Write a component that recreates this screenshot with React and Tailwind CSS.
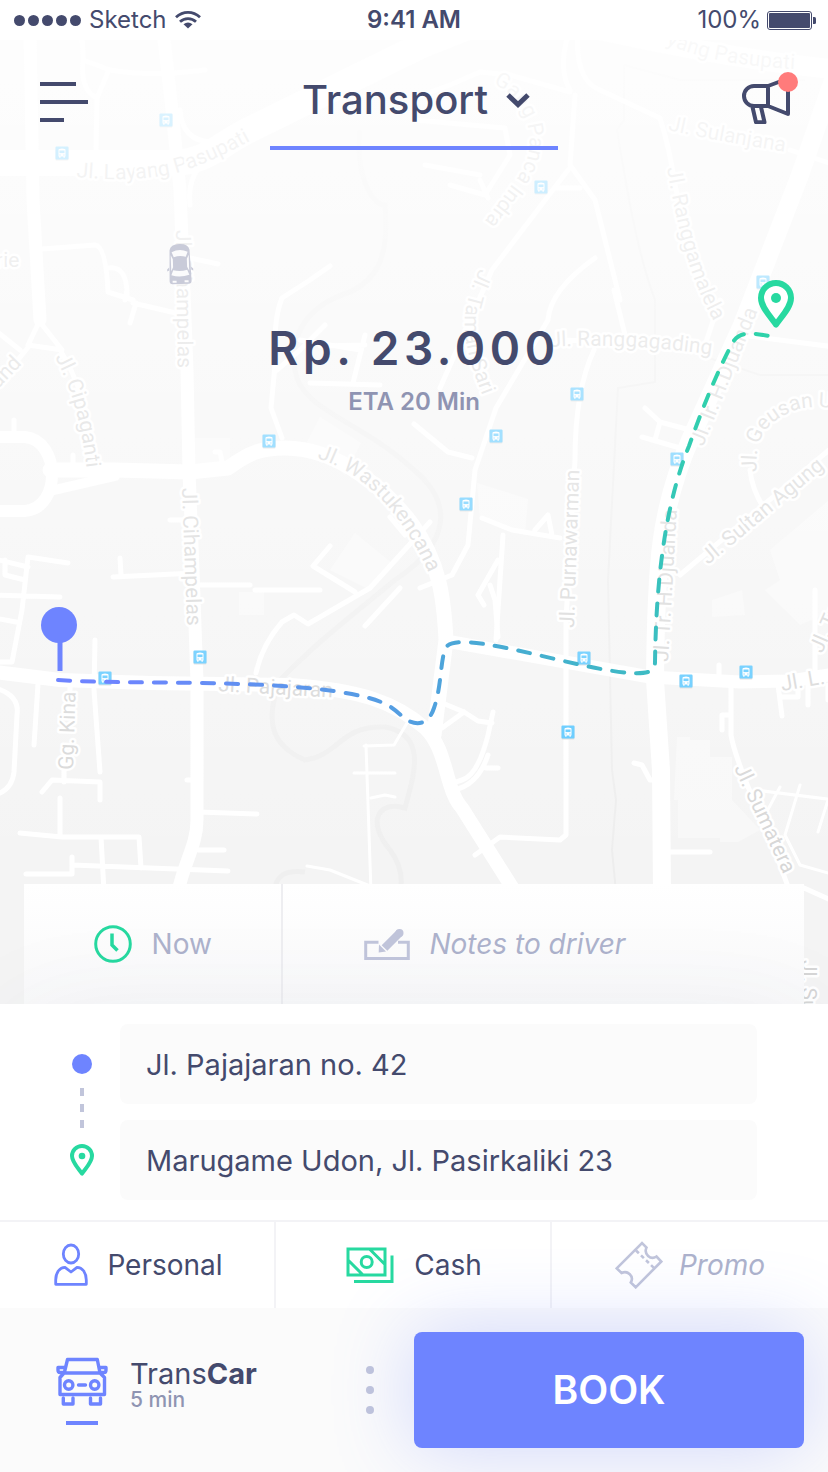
import React from "react";

const mainRoads = [
  ["M30 30L33 200L40 320", 13],
  ["M-5 163H165C205 164 215 148 245 132L420 46L470 26", 26],
  ["M163 30L172 110L180 190L187 370L189 472L193 570L197 682V820C197 845 184 862 178 892", 13],
  ["M-5 437H25C60 440 62 508 25 511H-5", 12],
  ["M50 470H115L190 472L228 468C250 452 262 448 285 448C340 448 388 492 412 524C440 562 444 600 446 640L434 735", 15],
  ["M50 491L115 476", 10],
  ["M-5 672L60 680L150 683L290 685C360 690 395 702 425 728C448 750 445 790 462 808L515 892", 14],
  ["M446 641L650 677L740 682L790 681L835 674", 13],
  ["M840 60L800 175L742 325L690 440C660 510 656 560 655 680L661 770L662 892", 18],
  ["M600 30C690 50 760 62 840 70", 20],
];

const smallRoads = [
  "M82 30L83 60L110 70Q150 77 205 70M83 60Q80 90 97 98L108 72M97 98L96 150",
  "M40 320L28 345L62 350L40 322M-5 330L20 350M-5 388L30 345M60 350Q86 390 98 470",
  "M180 110Q182 140 210 142M190 205Q186 170 215 155",
  "M42 249L95 245Q106 246 108 292L133 300M108 268Q128 265 127 298M125 300L127 290M133 303L180 314M136 303L130 323",
  "M190 258L218 264M330 266L310 280L282 298Q273 320 275 365L271 408L282 438M277 370L300 350L325 325M320 346L365 345M365 335L353 383M310 383L380 385M300 340L360 350",
  "M14 420V438M73 455V470M215 452H220L222 462M170 520H190M113 577L195 573M120 558L121 575M200 585H250",
  "M-5 559L28 567M28 557L68 563M28 557L22 610L12 662H-5M-5 595L60 597M-5 618L16 622M5 560V575L25 580",
  "M95 640L94 690L100 772M38 684L34 745M70 684V700M-5 688Q20 695 17 715L14 772Q12 790 -5 795M64 760V782M42 792L52 780L100 782V800M60 798V835M20 833L62 837H139L141 868M26 874H72V857M72 865L228 871M101 837L104 892M198 812L257 814M198 850H224M188 690M187 780H196",
  "M256 673Q262 645 282 622L294 615L308 624L370 588L430 522M330 546L313 566L355 592M365 626L400 588M390 517L405 535M255 590L320 590",
  "M568 35Q558 70 570 90M578 30Q574 80 600 90L660 118Q670 150 675 185L690 250M575 95L570 165L595 200L620 300M568 170L492 270L440 388M556 188L580 188M425 165L480 175M415 120L505 128L510 155L485 195L450 185M480 180L488 198M414 98L450 85L480 72L510 75L570 92",
  "M595 258Q550 290 548 320L496 408L475 470L468 545L452 575L420 588M414 424L448 452L472 458M614 290L625 335M560 340L705 345L720 300M594 350Q575 390 575 460L566 620V835L560 840L500 837L475 855",
  "M482 518L512 530L560 538M503 535L496 640M498 560L478 595L484 605M535 530L548 515L552 535M645 408L660 422L690 430M642 437L680 448M660 422L655 440M740 335L835 347M750 470Q752 490 765 510M680 575L835 445",
  "M440 702L464 712L478 721L492 723M442 728L464 712M493 712L488 735Q478 775 462 780L450 784M488 755Q478 785 454 790M486 768H498M498 637L495 600L490 585",
  "M719 665V680M731 685V735Q735 760 770 838L790 892M722 715H731M722 715V730M778 685L782 716M782 697H798V682M808 682V705M634 763L642 765L650 780H660M662 852H710",
  "M804 888L835 902M815 590V675M828 685V700",
  "M790 150L835 165",
];
const lanes =
  "M366 745L371 892M364 746L394 745L410 718M354 773H395M371 798L385 795L395 797M307 866L330 870L375 888M755 790L835 800M780 787L765 815M800 785L785 835L800 865L835 875M828 800L818 832";

const rivers =
  "M360 130C355 170 370 205 385 205C390 260 375 280 350 292C310 305 290 330 295 370C300 410 360 420 414 470C450 500 455 540 395 580C340 625 320 640 280 680C265 720 270 745 305 760C340 755 340 725 385 727C430 735 412 780 405 808C380 800 365 820 390 850Q405 870 400 892M275 892Q275 868 305 872";
const borders =
  "M624 65V120L617 130C630 210 640 260 655 300V382L618 388L608 580L612 770L616 800L612 850L616 892M624 65L680 80L805 80M700 355L760 375H835";

const labels = [
  ["M76 177Q150 184 192 168T275 126", "Jl. Layang Pasupati"],
  ["M666 44Q720 68 820 70", "yang Pasupati"],
  ["M668 130Q720 142 800 154", "Jl. Sulanjana"],
  ["M493 84C516 92 550 138 514 182L484 222", "Gang Panca Indra"],
  ["M667 168C678 230 690 285 722 335", "Jl. Ranggamalela"],
  ["M176 230L178 390", "Jl. Cihampelas"],
  ["M-4 267H60", "rie"],
  ["M-2 389L48 338", "and"],
  ["M55 357C70 385 82 420 88 480", "Jl. Cipaganti"],
  ["M182 488L188 650", "Jl. Cihampelas"],
  ["M317 458C370 475 408 520 436 590", "Jl. Wastukencana"],
  ["M73 770L76 680", "Gg. Kina"],
  ["M218 691L360 699", "Jl. Pajajaran"],
  ["M574 628L580 450", "Jl. Purnawarman"],
  ["M480 268C455 320 462 345 492 420", "Jl. Taman Sari"],
  ["M550 347Q630 342 720 356", "Jl. Ranggagading"],
  ["M703 447L764 295", "Jl. Ir. H.Djuanda"],
  ["M668 662L678 490", "Jl. Tr. H.Djuanda"],
  ["M757 472C754 440 764 422 796 410Q820 402 880 416", "Jl. Geusan Ulun"],
  ["M708 565L840 455", "Jl. Sultan Agung"],
  ["M822 654L850 590", "Jl. Tr"],
  ["M782 691L840 681", "Jl. L."],
  ["M734 768L800 910", "Jl. Sumatera"],
  ["M802 960V1060", "Jl. Sum"],
];

const stops = [
  [62, 153], [166, 120], [541, 187], [763, 282], [577, 394],
  [269, 441], [496, 436], [466, 504], [677, 459], [200, 657],
  [105, 678], [584, 658], [686, 681], [746, 672], [568, 732],
];

function PinShape() {
  return (
    <>
      <path
        d="M18 44.500C12 36 3 27 3 18a15 15 0 0 1 30 0c0 9-9 18-15 26.500z"
        fill="#fff"
        stroke="#27d9a0"
        strokeWidth="6"
        strokeLinejoin="round"
      />
      <circle cx="18" cy="18" r="5" fill="#27d9a0" />
    </>
  );
}

function CityMap() {
  return (
    <svg
      className="absolute inset-0 h-full w-full"
      viewBox="0 40 828 964"
      preserveAspectRatio="xMidYMid slice"
      role="img"
      aria-label="Route map"
    >
      <defs>
        <linearGradient id="fade" gradientUnits="userSpaceOnUse" x1="0" y1="40" x2="0" y2="880">
          <stop offset="0" stopColor="#fff" stopOpacity=".86" />
          <stop offset="1" stopColor="#fff" stopOpacity="0" />
        </linearGradient>
        <linearGradient id="trip" gradientUnits="userSpaceOnUse" x1="130" y1="720" x2="740" y2="420">
          <stop offset="0" stopColor="#6e84ff" />
          <stop offset=".5" stopColor="#4aa8d6" />
          <stop offset=".8" stopColor="#38c3bc" />
          <stop offset="1" stopColor="#2fd2aa" />
        </linearGradient>
        {labels.map(([d], i) => (
          <path key={i} id={`street-${i}`} d={d} />
        ))}
      </defs>
      <rect y="40" width="828" height="964" fill="#f4f4f4" />
      <g fill="#f8f8f8">
        <path d="M320 417L361 443L345 475L307 442zM355 533L394 565L370 590L330 570zM477 483L528 499L525 535L480 520zM239 592H264V615H239zM195 438H230V470H195z" />
        <path d="M677 737H690V740H710V757H732V800L760 830L738 842H720V838H678V800H674zM835 495L770 550L780 580L765 590L800 625L835 610zM712 600L742 590L745 615L712 617z" />
      </g>
      <path d={rivers} fill="none" stroke="#efefef" strokeWidth="5" />
      <path d={borders} fill="none" stroke="#ededed" strokeWidth="2" />
      <g fill="none" stroke="#fff" strokeLinecap="round" strokeLinejoin="round">
        <path d={lanes} strokeWidth="3" />
        {smallRoads.map((d) => (
          <path key={d} d={d} strokeWidth="5" />
        ))}
        {mainRoads.map(([d, w]) => (
          <path key={d} d={d} strokeWidth={w} />
        ))}
      </g>
      <g
        fontFamily="Roboto, sans-serif"
        fontSize="21"
        fill="#d6d6d6"
        stroke="#fff"
        strokeWidth="5"
        strokeLinejoin="round"
        paintOrder="stroke"
      >
        {labels.map(([, name], i) => (
          <text key={i}>
            <textPath href={`#street-${i}`}>{name}</textPath>
          </text>
        ))}
      </g>
      {stops.map(([x, y]) => (
        <g key={`${x}-${y}`} transform={`translate(${x - 6.5} ${y - 6.5})`}>
          <rect y="1" width="13" height="13" rx="1" fill="#dcdcdc" />
          <rect width="13" height="13" rx="1" fill="#55c6ff" />
          <path d="M3 3.500Q3 2 6.500 2T10 3.500V10H9.300V11.200H8V10H5V11.200H3.700V10H3z" fill="#fff" />
          <rect x="4" y="4" width="5" height="2.600" fill="#55c6ff" />
          <path d="M4 8h1.200v1H4zM7.800 8H9v1H7.800z" fill="#55c6ff" />
        </g>
      ))}
      <rect y="40" width="828" height="964" fill="url(#fade)" />

      <g transform="translate(180 264) rotate(-2)" fill="#c9cbd9">
        <path d="M-10-14Q-9-20 0-20T10-14L11 17Q11 20 8 20H-8Q-11 20-11 17z" />
        <path d="M-11 3L-13 5V7L-11 6zM11 3L13 5V7L11 6z" />
        <path d="M-8-12Q0-16 8-12L6-7Q0-9-6-7zM-7 6Q0 8 7 6L9 11Q0 14-9 11zM-9-9L-7-5V3L-9 7zM9-9L7-5V3L9 7zM-8 16.500H-4V18.500H-8zM4 16.500H8V18.500H4z" fill="#fbfbfc" />
      </g>

      <path
        d="M58 680C110 683 150 682 200 683C270 684 330 688 365 697C390 703 396 711 404 718C415 726 428 726 434 708C442 685 440 660 446 647C452 640 470 642 484 644C530 651 590 670 630 673C650 674 655 671 655 662C656 590 663 510 689 446C706 398 722 362 733 342C740 331 752 333 769 336"
        fill="none"
        stroke="url(#trip)"
        strokeWidth="4"
        strokeLinecap="round"
        strokeDasharray="12 12"
      />
      <circle cx="59" cy="625" r="18" fill="#6e84ff" />
      <path d="M60 640V671" stroke="#6e84ff" strokeWidth="5" />
      <g transform="translate(758 280)">
        <PinShape />
      </g>
    </svg>
  );
}

function StatusBar() {
  return (
    <div className="grid h-10 grid-cols-[1fr_auto_1fr] items-center bg-white px-3.5 text-2xl">
      <div className="flex items-center gap-2">
        <div className="flex gap-[3px]" aria-hidden="true">
          <i className="size-[11px] rounded-full bg-[#444a6d]" />
          <i className="size-[11px] rounded-full bg-[#444a6d]" />
          <i className="size-[11px] rounded-full bg-[#444a6d]" />
          <i className="size-[11px] rounded-full bg-[#444a6d]" />
          <i className="size-[11px] rounded-full bg-[#444a6d]" />
        </div>
        <span>Sketch</span>
        <svg width="26" height="18" viewBox="0 0 26 18" fill="none" stroke="#444a6d" strokeWidth="2.800" aria-hidden="true">
          <path d="M1 6.300C8-.200 18-.200 25 6.300M5 10.700C9.500 6.500 16.500 6.500 21 10.700" />
          <path d="M13 17.500L8.500 13.300Q13 9.800 17.500 13.300z" fill="#444a6d" stroke="none" />
        </svg>
      </div>
      <span className="font-semibold">9:41 AM</span>
      <div className="-mr-0.5 flex items-center justify-end gap-1.5">
        <span>100%</span>
        <svg width="49" height="19" viewBox="0 0 49 19" aria-hidden="true">
          <rect x=".5" y=".5" width="44" height="18" rx="2.500" fill="none" stroke="#444a6d" />
          <rect x="2" y="2" width="41" height="15" rx="1" fill="#444a6d" />
          <path d="M46 6h1.500q1.500 0 1.500 1.500v4q0 1.500-1.500 1.500H46z" fill="#444a6d" />
        </svg>
      </div>
    </div>
  );
}

function Header() {
  return (
    <header className="grid grid-cols-[1fr_auto_1fr] items-center px-10">
      <button aria-label="Menu" className="mt-3.5 flex w-12 flex-col gap-3.5">
        <i className="h-1 w-9 bg-[#444a6d]" />
        <i className="h-1 w-12 bg-[#444a6d]" />
        <i className="h-1 w-6 bg-[#444a6d]" />
      </button>
      <button className="flex h-[110px] w-72 items-center justify-center gap-4.5 border-b-4 border-[#6e84ff] pt-3.5 pl-1 text-[40px] font-medium">
        Transport
        <svg width="24" height="16" viewBox="0 0 24 16" fill="none" stroke="#444a6d" strokeWidth="5" aria-hidden="true">
          <path d="M2 3L12 12.500L22 3" />
        </svg>
      </button>
      <button aria-label="Announcements" className="-mr-3 mt-1.5 justify-self-end">
        <svg width="58" height="52" viewBox="0 0 58 52" fill="none" stroke="#444a6d" strokeWidth="4" strokeLinejoin="round">
          <path d="M26 14H12a10 10 0 0 0 0 20H26zL46 6.500V42L26 34M10.500 35L14 50.200H22.500L19 35" />
          <circle cx="46" cy="10" r="10" fill="#ff7b7b" stroke="none" />
        </svg>
      </button>
    </header>
  );
}

function TripOptions() {
  return (
    <div className="mx-6 mt-auto flex h-30 bg-linear-to-b from-white to-[#f9f9fa] text-[28px] text-[#adb2cc]">
      <button className="flex w-[33%] items-center justify-center gap-5">
        <svg width="38" height="38" viewBox="0 0 38 38" fill="none" stroke="#27d9a0" strokeWidth="3" aria-hidden="true">
          <circle cx="19" cy="19" r="17.300" />
          <path d="M18 8.500V20L23.500 25.500" strokeWidth="3.500" />
        </svg>
        Now
      </button>
      <label className="flex min-w-0 flex-1 items-center gap-4.5 border-l-2 border-[#eeeef1] pl-20">
        <svg className="shrink-0" width="48" height="36" viewBox="0 0 48 36" aria-hidden="true">
          <path d="M15.500 16.300H2.700V32.500H45.300V16.300H35" fill="none" stroke="#c1c5db" strokeWidth="3" />
          <path d="M21.500 22L36.500 7" stroke="#c1c5db" strokeWidth="8" />
          <circle cx="36.500" cy="7" r="4" fill="#c1c5db" />
          <path d="M16 18.500L23 25.500L15.700 26.500z" fill="#c1c5db" />
        </svg>
        <input
          aria-label="Notes to driver"
          placeholder="Notes to driver"
          className="min-w-0 flex-1 bg-transparent italic outline-none placeholder:text-[#adb2cc]"
        />
      </label>
    </div>
  );
}

function Addresses() {
  return (
    <section className="flex items-center pt-5 pr-[71px] pb-5 pl-[70px]">
      <div className="flex w-[50px] flex-col pt-1.5">
        <div className="flex w-6 flex-col items-center">
          <i className="size-5 rounded-full bg-[#6e84ff]" />
          <i className="mt-3.5 h-2 w-1 bg-[#c1c5db]" />
          <i className="mt-2 h-2 w-1 bg-[#c1c5db]" />
          <i className="mt-2 h-2 w-1 bg-[#c1c5db]" />
          <svg className="mt-4" width="24" height="32" viewBox="0 0 36 48" aria-hidden="true">
            <PinShape />
          </svg>
        </div>
      </div>
      <div className="flex min-w-0 flex-1 flex-col gap-4">
        <input
          aria-label="Pickup address"
          defaultValue="Jl. Pajajaran no. 42"
          className="h-20 w-full rounded-lg bg-[#fbfbfb] px-6.5 text-[29px] outline-none"
        />
        <input
          aria-label="Destination address"
          defaultValue="Marugame Udon, Jl. Pasirkaliki 23"
          className="h-20 w-full rounded-lg bg-[#fbfbfb] px-6.5 text-[29px] outline-none"
        />
      </div>
    </section>
  );
}

function BookingOptions() {
  return (
    <section className="grid h-22 grid-cols-3 border-t-2 border-[#f3f3f6] text-[28px]">
      <button className="flex items-center justify-center gap-4.5 border-r-2 border-[#f3f3f6] pl-0.5">
        <svg width="36" height="44" viewBox="0 0 36 44" fill="none" stroke="#6e84ff" strokeWidth="2.800" strokeLinejoin="round" aria-hidden="true">
          <ellipse cx="18" cy="11" rx="7.700" ry="9" />
          <path d="M2.700 41.300V37C2.700 30 6.500 24.300 12 24.300L18 29L24 24.300C29.500 24.300 33.300 30 33.300 37V41.300z" />
        </svg>
        Personal
      </button>
      <button className="flex items-center justify-center gap-5 border-r-2 border-[#f3f3f6] pl-0.5">
        <svg width="48" height="38" viewBox="0 0 48 38" fill="none" stroke="#27d9a0" strokeWidth="3" aria-hidden="true">
          <path d="M2 3H39V29H2zM2 14L16.500 28.500M24 3.500L39 18.500M46 9.500V35.500H8" />
          <circle cx="20.700" cy="16" r="5.500" />
        </svg>
        Cash
      </button>
      <button className="flex items-center justify-center gap-4 text-[#adb2cc] italic">
        <svg width="48" height="48" viewBox="0 0 48 48" fill="none" stroke="#c1c5db" strokeWidth="2.600" aria-hidden="true">
          <path d="M1.700 27.300L27 2L31.500 6.500C28.500 13 35.500 19.500 41.500 15.500L46.300 20.500L20.700 46.300L15.800 41.500C19.500 35 12.500 29 6.500 32z" />
          <path d="M21 9.500L39.500 27.500" strokeDasharray="4 3" />
        </svg>
        Promo
      </button>
    </section>
  );
}

function BookingBar() {
  return (
    <footer className="flex h-41 items-center bg-[#fbfbfb]">
      <div className="flex w-1/2 items-center justify-between pr-7 pl-14">
        <button className="flex items-start gap-5.5 pt-0.5 text-left">
          <span className="flex flex-col items-center gap-3.5">
            <svg width="52" height="50" viewBox="0 0 52 50" fill="none" stroke="#6e84ff" strokeWidth="3.400" strokeLinejoin="round" strokeLinecap="round" aria-hidden="true">
              <path d="M8.500 15L11.500 2.500H41.300L43.800 15M8 16H44L48.500 20.500V37.500H4V20.500zM8.500 15.500H4Q2 15.500 2 13V10.500H8M44 15.500H48Q50 15.500 50 13V10.500H44" />
              <path d="M7.300 41V47H17V41M34.500 41V47H44.500V41" />
              <circle cx="12.700" cy="28" r="4.200" />
              <circle cx="38.700" cy="28" r="4.200" />
              <path d="M22.500 28H29.500" />
            </svg>
            <i className="h-1 w-8 bg-[#6e84ff]" />
          </span>
          <span className="flex flex-col pt-px">
            <span className="text-[29px] leading-8">
              Trans<b className="font-bold">Car</b>
            </span>
            <span className="text-[21px] leading-5 font-medium text-[#8f94b2]">5 min</span>
          </span>
        </button>
        <button aria-label="More options" className="flex flex-col gap-3 px-3">
          <i className="size-2 rounded-full bg-[#c1c5db]" />
          <i className="size-2 rounded-full bg-[#c1c5db]" />
          <i className="size-2 rounded-full bg-[#c1c5db]" />
        </button>
      </div>
      <button className="relative mr-6 h-29 flex-1 rounded-lg bg-[#6e84ff] text-[39px] font-semibold text-white shadow-[0_0_80px_rgba(110,132,255,0.3)]">
        BOOK
      </button>
    </footer>
  );
}

export default function App() {
  return (
    <main className="flex min-h-screen flex-col overflow-hidden bg-white font-['Inter',sans-serif] text-[#444a6d]">
      <StatusBar />
      <section className="relative flex flex-1 flex-col">
        <CityMap />
        <div className="relative flex flex-1 flex-col">
          <Header />
          <div className="mt-[166px] mb-10 text-center">
            <h1 className="text-[46px] leading-16 font-semibold tracking-widest">Rp. 23.000</h1>
            <p className="mt-1.5 text-2xl leading-8 font-semibold text-[#8f94b2]">ETA 20 Min</p>
          </div>
          <TripOptions />
        </div>
      </section>
      <div className="relative">
        <div className="absolute inset-0 shadow-[0_0_110px_-20px_rgba(68,74,109,0.08)]" aria-hidden="true" />
        <div className="relative bg-white">
          <Addresses />
          <BookingOptions />
          <BookingBar />
        </div>
      </div>
    </main>
  );
}
